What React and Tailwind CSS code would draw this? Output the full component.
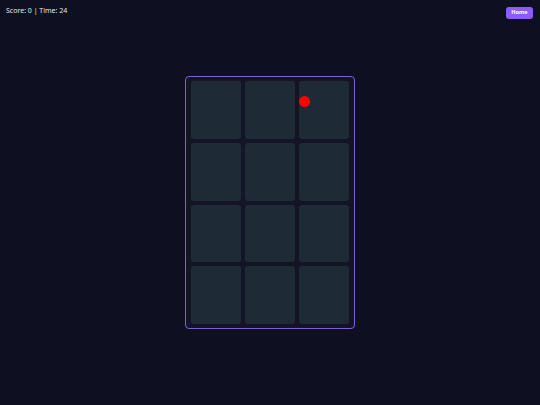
import React, { useState } from "react";

const cells = Array.from({ length: 12 }, (_, i) => i);

const App = () => {
  const [score] = useState(0);
  const [time] = useState(24);
  const [target] = useState({ cell: 2, x: 0, y: 15 });

  return (
    <div className="w-[540px] h-[405px] bg-[#0e1021] font-['Noto_Sans',sans-serif] text-white overflow-hidden">
      <div className="flex items-start justify-between h-[22px] pl-[6px] pr-[7px]">
        <span className="mt-[6px] text-[7px] leading-[10px] text-gray-200">
          Score: {score} | Time: {time}
        </span>
        <button className="mt-[7px] w-[27px] h-[12px] rounded-[3px] bg-[#8b5cf6] text-[5.5px] font-bold leading-none">
          Home
        </button>
      </div>

      <div className="flex justify-center mt-[54px]">
        <div className="w-[170px] px-[5px] py-[4px] border border-[#7b62d4] rounded-[4px] bg-[#131527] grid grid-cols-3 gap-[4px]">
          {cells.map((i) => (
            <div
              key={i}
              className="relative h-[57.75px] rounded-[3px] bg-[#1f2a37]"
            >
              {target.cell === i && (
                <span
                  className="absolute w-[11px] h-[11px] rounded-full bg-[#ff0000]"
                  style={{ left: target.x, top: target.y }}
                />
              )}
            </div>
          ))}
        </div>
      </div>
    </div>
  );
};

export default App;
